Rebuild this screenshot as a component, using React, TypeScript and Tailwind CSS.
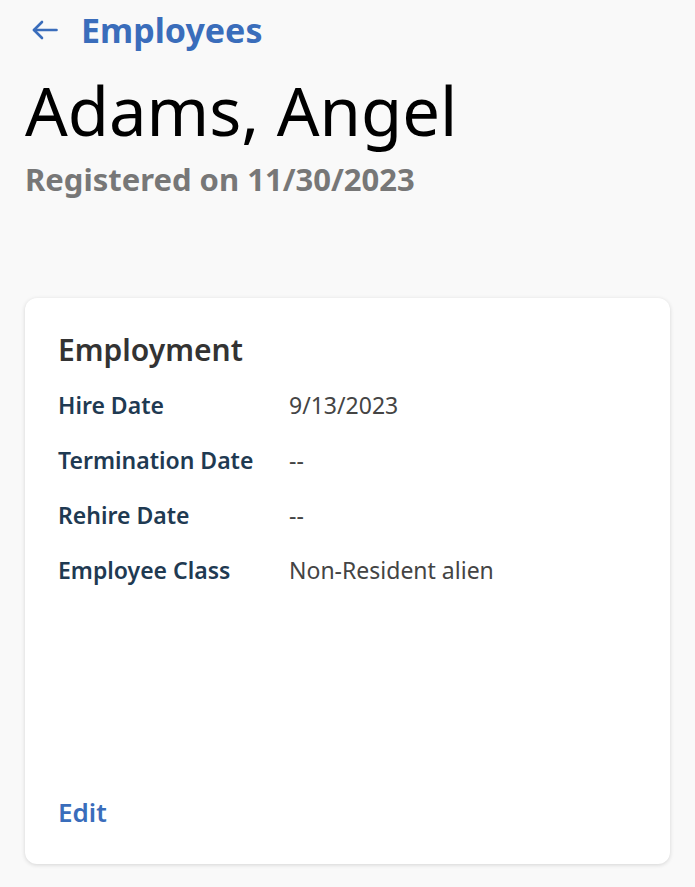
import React from 'react'

const ROWS: { label: string; value: string }[] = [
  { label: 'Hire Date', value: '9/13/2023' },
  { label: 'Termination Date', value: '--' },
  { label: 'Rehire Date', value: '--' },
  { label: 'Employee Class', value: 'Non-Resident alien' },
]

export default function App() {
  return (
    <div
      className="min-h-[887px] bg-[#f9f9f9] px-[25px] pt-[12px] pb-[22px]"
      style={{ fontFamily: '"Noto Sans", Lato, sans-serif' }}
    >
      <a href="#" className="flex items-center gap-[23px] pl-[7px] text-[#3a6dbb]">
        <svg width="26" height="20" viewBox="0 0 26 20" fill="none" stroke="currentColor" strokeWidth="2.6" strokeLinecap="round" strokeLinejoin="round">
          <path d="M24.5 10H2" />
          <path d="M10 2L2 10l8 8" />
        </svg>
        <span className="text-[34px] font-bold leading-[36px]">Employees</span>
      </a>

      <h1 className="mt-[30px] text-[67px] leading-[64px] font-normal text-black">Adams, Angel</h1>
      <p className="mt-[21px] text-[31px] leading-[32px] font-bold text-[#777777]">Registered on 11/30/2023</p>

      <div className="mt-[103px] flex h-[566px] flex-col rounded-[12px] bg-white px-[33px] pt-[36px] pb-[37px] shadow-[0_1px_4px_rgba(0,0,0,0.15)]">
        <h2 className="text-[30px] leading-[32px] font-semibold text-[#333333]">Employment</h2>
        <div className="mt-[25px] flex flex-col gap-[27px]">
          {ROWS.map(r => (
            <div key={r.label} className="flex items-baseline text-[23px] leading-[28px]">
              <span className="w-[231px] shrink-0 font-semibold text-[#1f3a52]">{r.label}</span>
              <span className="text-[#444444]">{r.value}</span>
            </div>
          ))}
        </div>
        <button className="mt-auto self-start text-[26px] leading-[30px] font-semibold text-[#3a6dbb]">Edit</button>
      </div>
    </div>
  )
}
